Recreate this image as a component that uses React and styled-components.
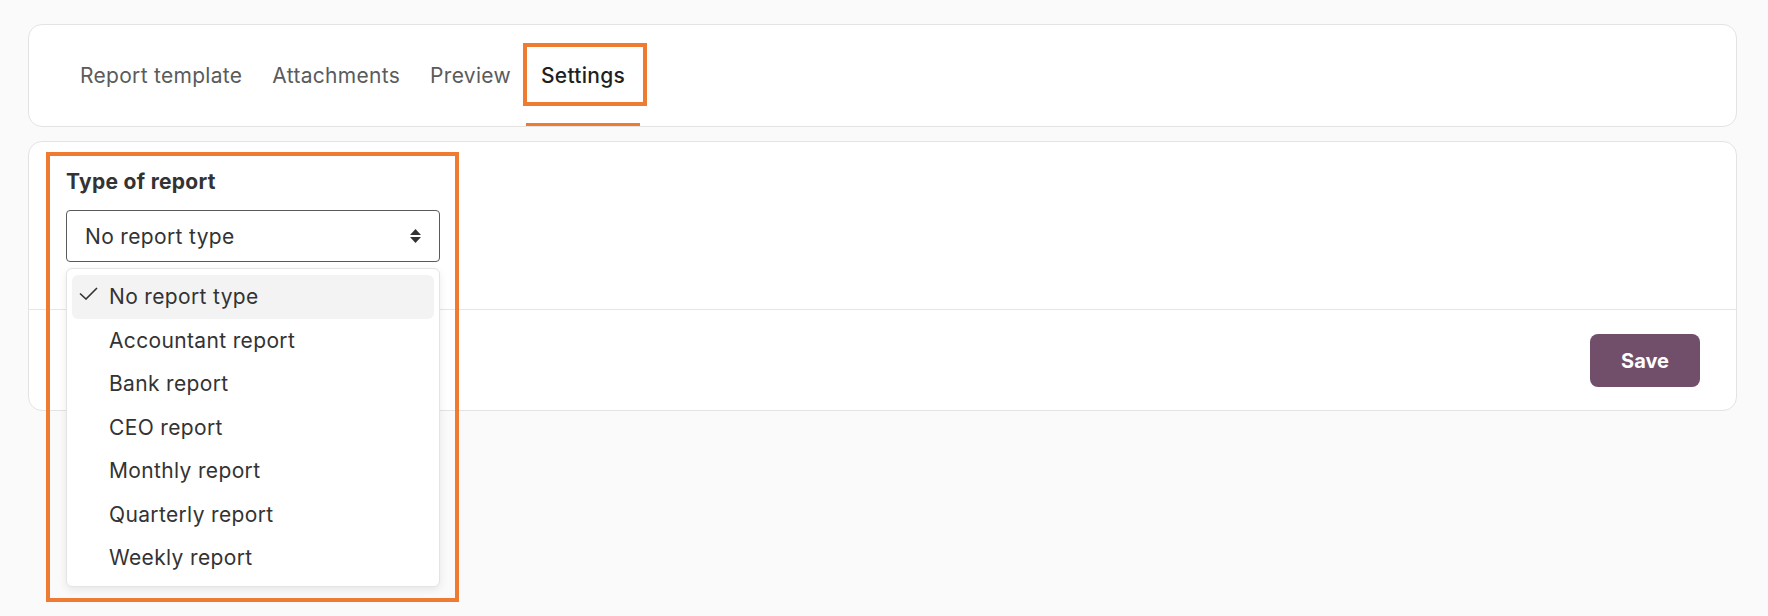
import React from "react";
import styled, { createGlobalStyle } from "styled-components";

const GlobalStyle = createGlobalStyle`
  html, body {
    margin: 0;
    padding: 0;
    background: #fafafa;
  }
  body {
    font-family: Inter, "Noto Sans", "Liberation Sans", sans-serif;
    color: #333;
    -webkit-font-smoothing: antialiased;
  }
  * { box-sizing: border-box; }
`;

const ORANGE = "#ef7a32";

const Page = styled.div`
  min-height: 100vh;
  display: flex;
  flex-direction: column;
  gap: 14px;
  padding: 24px 31px 24px 28px;
`;

const Card = styled.div`
  background: #fff;
  border: 1px solid #e3e3e3;
  border-radius: 14px;
`;

const TabsCard = styled(Card)`
  height: 103px;
  padding: 0 36px 0 36px;
  display: flex;
  align-items: stretch;
`;

const TabList = styled.nav`
  display: flex;
  align-items: stretch;
`;

const Tab = styled.div`
  position: relative;
  display: flex;
  align-items: center;
  padding: 0 15px;
  font-size: 21px;
  letter-spacing: 0.3px;
  color: ${(p) => (p.$active ? "#1f1f1f" : "#5b5b5b")};
  font-weight: ${(p) => (p.$active ? 450 : 400)};
  cursor: pointer;

  &::after {
    content: "";
    position: absolute;
    left: 0;
    right: 0;
    bottom: 0;
    height: 3px;
    background: ${(p) => (p.$active ? ORANGE : "transparent")};
  }
`;

const Annotation = styled.div`
  position: absolute;
  border: 4px solid ${ORANGE};
  pointer-events: none;
  z-index: 5;
`;

const TabAnnotation = styled(Annotation)`
  left: -3px;
  top: 18px;
  width: calc(100% + 10px);
  height: 63px;
`;

const FieldAnnotation = styled(Annotation)`
  left: -20px;
  top: -17px;
  width: 413px;
  height: 450px;
`;

const FormBody = styled.div`
  padding: 27px 37px 47px;
`;

const FieldGroup = styled.div`
  position: relative;
  width: 374px;
`;

const Label = styled.div`
  font-size: 21px;
  line-height: 25px;
  letter-spacing: 0.3px;
  font-weight: 700;
  color: #333;
  margin-bottom: 16px;
`;

const SelectWrap = styled.div`
  position: relative;
`;

const SelectBox = styled.div`
  height: 52px;
  border: 1px solid #5a5a5a;
  border-radius: 4px;
  display: flex;
  align-items: center;
  justify-content: space-between;
  padding: 0 18px 0 18px;
  font-size: 21px;
  letter-spacing: 0.35px;
  color: #333;
  background: #fff;
`;

const Menu = styled.div`
  position: absolute;
  top: calc(100% + 6px);
  left: 0;
  width: 100%;
  background: #fff;
  border: 1px solid #e4e4e4;
  border-radius: 6px;
  box-shadow: 0 3px 8px rgba(0, 0, 0, 0.08);
  padding: 6px 5px;
  z-index: 3;
`;

const Item = styled.div`
  position: relative;
  height: 43.5px;
  display: flex;
  align-items: center;
  padding-left: 37px;
  border-radius: 6px;
  font-size: 21px;
  letter-spacing: 0.35px;
  color: #333;
  background: ${(p) => (p.$selected ? "#f3f3f3" : "transparent")};
`;

const Check = styled.svg`
  position: absolute;
  left: 7px;
  top: 12px;
`;

const Footer = styled.div`
  border-top: 1px solid #e6e6e6;
  padding: 24px 36px 23px;
  display: flex;
  justify-content: flex-end;
`;

const SaveButton = styled.button`
  width: 110px;
  height: 53px;
  border: none;
  border-radius: 8px;
  background: #714f6a;
  color: #fff;
  font-family: inherit;
  font-size: 20px;
  font-weight: 700;
  cursor: pointer;
`;

const tabs = ["Report template", "Attachments", "Preview", "Settings"];
const options = [
  "No report type",
  "Accountant report",
  "Bank report",
  "CEO report",
  "Monthly report",
  "Quarterly report",
  "Weekly report",
];

function SortIcon() {
  return (
    <svg width="11" height="14" viewBox="0 0 11 14" aria-hidden="true">
      <path d="M5.5 0 L11 6 L0 6 Z" fill="#333" />
      <path d="M0 8 L11 8 L5.5 14 Z" fill="#333" />
    </svg>
  );
}

export default function App() {
  return (
    <>
      <GlobalStyle />
      <Page>
        <TabsCard>
          <TabList>
            {tabs.map((t) => (
              <Tab key={t} $active={t === "Settings"}>
                {t}
                {t === "Settings" && <TabAnnotation />}
              </Tab>
            ))}
          </TabList>
        </TabsCard>
        <Card>
          <FormBody>
            <FieldGroup>
              <FieldAnnotation />
              <Label>Type of report</Label>
              <SelectWrap>
                <SelectBox>
                  <span>No report type</span>
                  <SortIcon />
                </SelectBox>
                <Menu>
                  {options.map((o, i) => (
                    <Item key={o} $selected={i === 0}>
                      {i === 0 && (
                        <Check width="19" height="13" viewBox="0 0 19 13">
                          <path
                            d="M1 6.5 L7 12 L18 1"
                            fill="none"
                            stroke="#333"
                            strokeWidth="1.6"
                          />
                        </Check>
                      )}
                      {o}
                    </Item>
                  ))}
                </Menu>
              </SelectWrap>
            </FieldGroup>
          </FormBody>
          <Footer>
            <SaveButton>Save</SaveButton>
          </Footer>
        </Card>
      </Page>
    </>
  );
}
